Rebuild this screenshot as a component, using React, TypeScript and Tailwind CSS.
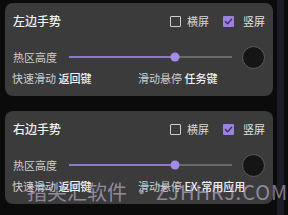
import React from "react";

const FONT = { fontFamily: '"Noto Sans CJK SC", "Noto Sans", sans-serif' };

function Box({ checked }: { checked?: boolean }) {
  if (checked) {
    return (
      <span className="flex h-[11px] w-[11px] items-center justify-center rounded-[1px] bg-[#9b82dc]">
        <svg width="9" height="9" viewBox="0 0 10 10" fill="none">
          <path d="M1.5 5 L4 7.5 L8.5 2.5" stroke="#3b2a6a" strokeWidth="1.4" strokeLinecap="round" strokeLinejoin="round" />
        </svg>
      </span>
    );
  }
  return <span className="h-[11px] w-[11px] rounded-[1px] border-[1.5px] border-[#cfcfcf]" />;
}

function GestureCard({ title, fast, hover }: { title: string; fast: string; hover: string }) {
  return (
    <div className="flex h-[93px] w-[268px] flex-col rounded-[8px] bg-[#3b3b3b] pl-[8px] pr-[8px] pt-[11px]">
      <div className="flex h-[14px] items-center">
        <span className="text-[12px] leading-none font-medium text-[#f0f0f0]">{title}</span>
        <div className="ml-auto flex items-center">
          <Box />
          <span className="ml-[6px] text-[11px] leading-none text-[#d8d8d8]">横屏</span>
          <span className="ml-[14px]">
            <Box checked />
          </span>
          <span className="ml-[9px] text-[11px] leading-none text-[#e0e0e0]">竖屏</span>
        </div>
      </div>
      <div className="mt-[17px] flex h-[24px] items-center">
        <span className="text-[11px] leading-none text-[#cfcfcf]">热区高度</span>
        <div className="relative ml-[12px] flex h-[10px] w-[163px] items-center">
          <div className="h-[2px] w-[65%] bg-[#8f76cf]" />
          <div className="h-[2px] flex-1 bg-[#686868]" />
          <span className="absolute left-[65%] top-1/2 h-[9px] w-[9px] -translate-x-1/2 -translate-y-1/2 rounded-full bg-[#a58be8]" />
        </div>
        <span className="ml-auto h-[23px] w-[23px] rounded-full border border-[#5c5c5c] bg-[#151515]" />
      </div>
      <div className="mt-[2px] flex h-[14px] items-center text-[11px] leading-none">
        <span className="w-[126px] -ml-[1px] text-[#d0d0d0]">
          快速滑动 <span className="font-medium text-[#f2f2f2]">{fast}</span>
        </span>
        <span className="text-[#d0d0d0]">
          滑动悬停 <span className="font-medium text-[#f2f2f2]">{hover}</span>
        </span>
      </div>
    </div>
  );
}

export default function App() {
  return (
    <div className="relative flex h-[215px] w-[288px] overflow-hidden bg-[#0b0b0b]" style={FONT}>
      <div className="flex flex-col gap-[15px] pl-[5px] pt-[3px]">
        <GestureCard title="左边手势" fast="返回键" hover="任务键" />
        <GestureCard title="右边手势" fast="返回键" hover="EX-常用应用" />
      </div>
      <div className="ml-[4px] w-[7px] bg-[#1c1c26]" />
      <div className="pointer-events-none absolute left-[27px] top-[182px] whitespace-pre text-[20px] leading-[20px] text-[rgba(222,206,240,0.55)]">
        指尖汇软件 • <span className="tracking-[1px]">ZJHHRJ.COM</span>
      </div>
    </div>
  );
}
